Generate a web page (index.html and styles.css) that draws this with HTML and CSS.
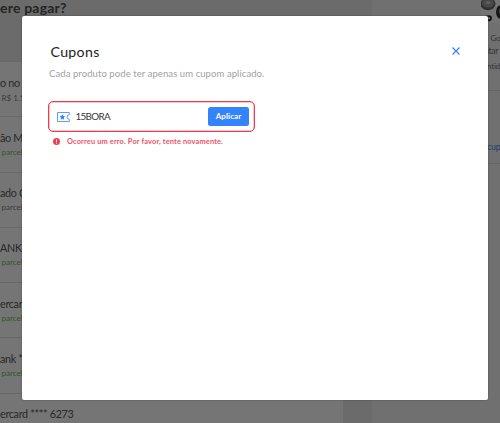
FILE: index.html
```html
<!DOCTYPE html>
<html lang="pt-BR">
<head>
<meta charset="utf-8">
<title>Cupons</title>
<link rel="stylesheet" href="styles.css">
</head>
<body>
<div class="page">
  <main class="main">
    <h1 class="heading">ere pagar?</h1>
    <ul class="methods">
      <li class="method"><span class="name">o no M</span><span class="note gray price">R$ 1.151</span></li>
      <li class="method"><span class="name">ão Me</span><span class="note">parcel</span></li>
      <li class="method"><span class="name">ado C</span><span class="note gray">parcel</span></li>
      <li class="method"><span class="name">ANK</span><span class="note">parcel</span></li>
      <li class="method"><span class="name">ercar</span><span class="note">parcel</span></li>
      <li class="method"><span class="name">ank **</span><span class="note">parcel</span></li>
      <li class="method"><span class="name">ercard **** 6273</span></li>
    </ul>
  </main>
  <aside class="side">
    <svg class="product" width="19" height="23" viewBox="0 0 19 23">
      <path class="tile" d="M0 0h19v23H0z"/>
      <ellipse cx="7" cy="4" rx="7.5" ry="6.2" fill="#30302f"/>
      <ellipse cx="7" cy="3" rx="6" ry="4.5" fill="#484844"/>
      <ellipse cx="7" cy="2.5" rx="2.5" ry="1.5" fill="#5e5e5a"/>
      <ellipse cx="20" cy="12" rx="5" ry="7" fill="#171717"/>
      <ellipse cx="20" cy="11" rx="2" ry="3" fill="#4b4b48"/>
      <path d="M4 17q6-2 6 1t-3 2" fill="none" stroke="#141414" stroke-width="2"/>
    </svg>
    <div class="product-text"><span class="title">Go</span><span class="detail">ntar</span><span class="quantity">ntid</span></div>
    <div class="coupon-link">cup</div>
  </aside>
</div>
<section class="modal" role="dialog" aria-labelledby="title">
  <header class="modal-head">
    <h2 id="title">Cupons</h2>
    <button class="close" aria-label="Fechar"><svg width="8" height="8" viewBox="0 0 8 8"><path d="M.5.5l7 7M7.5.5l-7 7" fill="none" stroke="#3483fa" stroke-width="1.2"/></svg></button>
  </header>
  <p class="subtitle">Cada produto pode ter apenas um cupom aplicado.</p>
  <div class="field">
    <svg class="ticket" width="13" height="10" viewBox="0 0 13 10">
      <path d="M.5.5h11.8v2.2a2.3 2.3 0 0 0 0 4.6v2.2H.5z" fill="none" stroke="#5c9cfb" stroke-width="1"/>
      <path d="M5.4 2.2l.9 1.8 2 .2-1.5 1.4.4 2.1-1.8-1-1.8 1 .4-2.1-1.5-1.4 2-.2z" fill="#3483fa"/>
    </svg>
    <span class="code">15BORA</span>
    <button class="apply">Aplicar</button>
  </div>
  <div class="error">
    <svg width="7" height="7" viewBox="0 0 7 7"><circle cx="3.5" cy="3.5" r="3.5" fill="#f23d4f"/><path d="M3.5 1.5v2.5M3.5 4.7v.9" stroke="#fff" stroke-width=".9"/></svg>
    <span>Ocorreu um erro. Por favor, tente novamente.</span>
  </div>
</section>
</body>
</html>
```
FILE: styles.css
```css
* { box-sizing: border-box; }
body {
  margin: 0;
  height: 423px;
  overflow: hidden;
  font-family: Lato, "Open Sans", sans-serif;
  color: #282828;
}
h1, h2, p, ul { margin: 0; padding: 0; }
button { border: 0; padding: 0; background: none; font-family: inherit; }
.page {
  display: grid;
  grid-template-columns: 372px 1fr;
  height: 423px;
  background: #6b6b6b;
  overflow: hidden;
}
.main { min-width: 0; }
.heading {
  height: 61px;
  font-size: 14px;
  line-height: 16px;
  font-weight: 700;
  letter-spacing: .2px;
  color: #242424;
}
.methods { width: 343px; list-style: none; background: #757575; }
.method {
  height: 55.3px;
  border-top: 1px solid #686868;
  padding-top: 13.5px;
  display: flex;
  flex-direction: column;
  white-space: nowrap;
}
.name { font-size: 10.8px; line-height: 14px; letter-spacing: -.32px; }
.note { font-size: 8px; line-height: 15px; padding-left: 1.5px; color: #2b572d; }
.gray { color: #3c3c3c; }
.price { padding-top: 1px; }
.side { background: #707070; padding-left: 109px; }
.product { display: block; }
.tile { fill: #747474; }
.product-text {
  height: 68px;
  padding: 9px 0 0 6px;
  display: flex;
  flex-direction: column;
  font-size: 8.5px;
  line-height: 13px;
  letter-spacing: -.2px;
  border-bottom: 1px solid #666;
  color: #343434;
}
.title { padding-left: 3.5px; font-size: 8px; }
.detail { margin-left: -3px; }
.quantity { margin-top: 2px; font-size: 8px; }
.coupon-link {
  height: 73px;
  padding: 49px 0 0 6px;
  font-size: 8.8px;
  line-height: 13px;
  letter-spacing: -.2px;
  color: #173e76;
  border-bottom: 1px solid #666;
}
.modal {
  position: absolute;
  left: 22px;
  top: 16px;
  width: 466px;
  height: 384px;
  padding: 26px 28.5px 0 27px;
  border-radius: 2px;
  background: #fff;
  box-shadow: 0 0 2px rgba(0, 0, 0, .35);
}
.modal-head { display: flex; justify-content: space-between; height: 22px; }
.modal-head h2 {
  padding-left: 1.5px;
  font-size: 14.2px;
  line-height: 19px;
  font-weight: 400;
  color: #222;
  letter-spacing: .3px;
}
.close { display: flex; width: 8px; height: 8px; margin-top: 5px; }
.subtitle {
  font-size: 9.5px;
  line-height: 19px;
  letter-spacing: .08px;
  color: #a1a1a1;
  white-space: nowrap;
}
.field {
  display: flex;
  align-items: center;
  width: 207px;
  height: 31px;
  margin: 18px 0 0 -1px;
  padding: 0 5px 0 8px;
  border: 1.5px solid #ee3b50;
  box-shadow: inset 0 0 0 .5px #f58a97;
  border-radius: 5px;
}
.code {
  margin: 0 0 1px 5.5px;
  font-size: 9.9px;
  line-height: 12px;
  letter-spacing: -.7px;
  color: #383838;
}
.apply {
  width: 41px;
  height: 19px;
  margin-left: auto;
  border-radius: 2.5px;
  background: #3483fa;
  color: #fff;
  font: 700 8px/19px Lato, sans-serif;
  letter-spacing: .1px;
}
.error {
  display: flex;
  align-items: center;
  gap: 7px;
  height: 11px;
  margin: 4px 0 0 4px;
  color: #ef5265;
  font: 700 7.4px/11px Lato, sans-serif;
  letter-spacing: .15px;
  white-space: nowrap;
}
```
